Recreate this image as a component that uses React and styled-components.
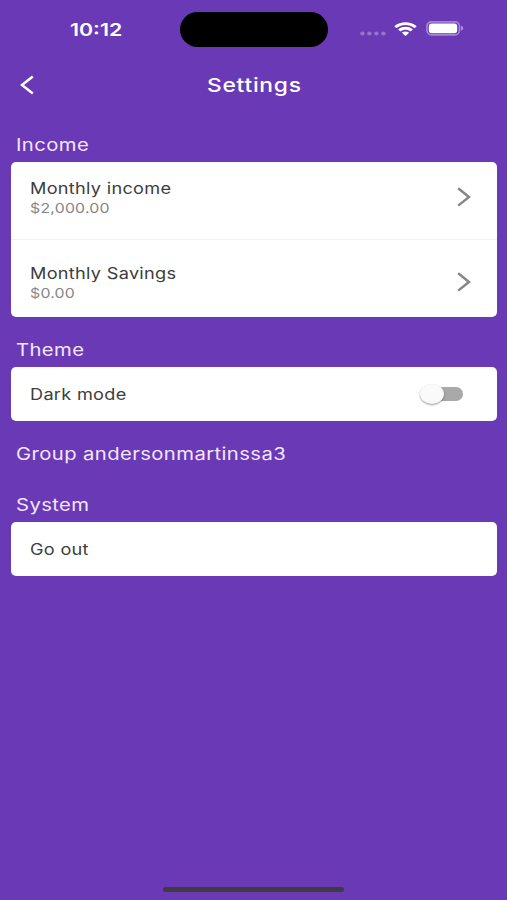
import React from 'react'
import styled, { createGlobalStyle } from 'styled-components'

const App = () => {
  return (
    <Screen>
      <GlobalStyle />
      <StatusBar>
        <Clock><Label $size={17.5} $weight={600} $stretch={1.22}>10:12</Label></Clock>
        <Island />
        <StatusIcons>
          <SignalDots />
          <WifiIcon />
          <BatteryIcon />
        </StatusIcons>
      </StatusBar>

      <NavBar>
        <BackButton aria-label="Back">
          <svg width="15" height="20" viewBox="0 0 15 20" fill="none">
            <path d="M12.8 1.4 L2 10 L12.8 18.4" stroke="#fff" strokeWidth="2.5" />
          </svg>
        </BackButton>
        <Title><Label $size={19} $weight={500} $stretch={1.2} $spacing={0.6}>Settings</Label></Title>
      </NavBar>

      <Section>
        <Heading><HeadingLabel>Income</HeadingLabel></Heading>
        <Card>
          <Row $top={16} $bottom={21}>
            <RowText>
              <RowTitle>Monthly income</RowTitle>
              <RowValue>$2,000.00</RowValue>
            </RowText>
            <ChevronRight />
          </Row>
          <Divider />
          <Row $top={23} $bottom={14}>
            <RowText>
              <RowTitle>Monthly Savings</RowTitle>
              <RowValue>$0.00</RowValue>
            </RowText>
            <ChevronRight />
          </Row>
        </Card>
      </Section>

      <Section>
        <Heading><HeadingLabel>Theme</HeadingLabel></Heading>
        <Card>
          <Row $top={17} $bottom={17}>
            <RowTitle>Dark mode</RowTitle>
            <Switch role="switch" aria-checked="false" aria-label="Dark mode">
              <Thumb />
            </Switch>
          </Row>
        </Card>
      </Section>

      <Section $gap={17}>
        <Heading><HeadingLabel>Group andersonmartinssa3</HeadingLabel></Heading>
      </Section>

      <Section>
        <Heading><HeadingLabel>System</HeadingLabel></Heading>
        <Card>
          <Row $top={17} $bottom={17}>
            <RowTitle>Go out</RowTitle>
          </Row>
        </Card>
      </Section>

      <HomeIndicator />
    </Screen>
  )
}

const SignalDots = () => (
  <svg width="27" height="16" viewBox="0 0 27 16" fill="#fff" fillOpacity="0.3">
    <ellipse cx="2.4" cy="12.5" rx="2.2" ry="1.9" />
    <ellipse cx="9.4" cy="12.5" rx="2.2" ry="1.9" />
    <ellipse cx="16.4" cy="12.5" rx="2.2" ry="1.9" />
    <ellipse cx="23.4" cy="12.5" rx="2.2" ry="1.9" />
  </svg>
)

const WifiIcon = () => (
  <Wifi width="23" height="14" viewBox="0.2 0 16.6 11.4" preserveAspectRatio="none" fill="#fff">
    <path d="M8.5 2.4c2.4 0 4.6.9 6.3 2.5.1.1.3.1.4 0l1.2-1.2c.2-.2.2-.3 0-.5C12-.9 5-.9.6 3.2c-.2.2-.2.3 0 .5l1.2 1.2c.1.1.3.1.4 0C3.9 3.3 6.1 2.4 8.5 2.4z" />
    <path d="M8.5 6.3c1.3 0 2.5.5 3.5 1.3.1.1.3.1.4 0l1.2-1.2c.2-.2.2-.3 0-.5-2.9-2.6-7.3-2.6-10.2 0-.2.2-.2.3 0 .5l1.2 1.2c.1.1.3.1.4 0 1-.8 2.2-1.3 3.5-1.3z" />
    <path d="M10.900 9c.2-.2.2-.3 0-.5-1.400-1.100-3.400-1.100-4.800 0-.2.2-.2.3 0 .5l2.100 2.100c.2.2.4.2.6 0L10.900 9z" />
  </Wifi>
)

const BatteryIcon = () => (
  <Battery width="38" height="15" viewBox="0 0 38 15">
    <rect x="0.9" y="0.8" width="32.6" height="13" rx="4.5" fill="none" stroke="#fff" strokeOpacity="0.38" strokeWidth="1.7" />
    <rect x="2.8" y="2.4" width="28.4" height="9.8" rx="3" fill="#fff" />
    <path d="M35.2 4.8v5c1.2-.4 1.9-1.4 1.9-2.5s-.7-2.1-1.9-2.5z" fill="#fff" fillOpacity="0.5" />
  </Battery>
)

const ChevronRight = () => (
  <Chevron width="14" height="20" viewBox="0 0 14 20" fill="none">
    <path d="M1.2 1.2 L12 10 L1.2 18.6" stroke="#858585" strokeWidth="2.4" />
  </Chevron>
)

const GlobalStyle = createGlobalStyle`
  * {
    box-sizing: border-box;
  }
  body {
    margin: 0;
    background: #6a39b5;
  }
`

const Screen = styled.div`
  display: flex;
  flex-direction: column;
  height: 900px;
  background: #6a39b5;
  font-family: Inter, 'Liberation Sans', sans-serif;
  color: #fff;
`

const Label = styled.span`
  display: inline-block;
  font-size: ${(p) => p.$size}px;
  font-weight: ${(p) => p.$weight || 400};
  letter-spacing: ${(p) => p.$spacing || 0}px;
  white-space: nowrap;
  transform: scaleX(${(p) => p.$stretch || 1.15});
  transform-origin: left center;
`

const StatusBar = styled.div`
  display: grid;
  grid-template-columns: 180px 148px 1fr;
  align-items: center;
  height: 58px;
`

const Clock = styled.div`
  padding: 2px 0 0 70px;
  line-height: 20px;
`

const Island = styled.div`
  height: 35px;
  margin-top: 1px;
  border-radius: 18px;
  background: #000;
`

const StatusIcons = styled.div`
  display: flex;
  align-items: center;
  padding-left: 32px;
  gap: 7px;
`

const Wifi = styled.svg`
  margin-top: -1px;
`

const Battery = styled.svg`
  margin: -1px 0 0 2px;
`

const NavBar = styled.header`
  display: grid;
  grid-template-columns: 207px 1fr;
  align-items: center;
  height: 54px;
  margin-bottom: 16px;
`

const BackButton = styled.button`
  display: flex;
  width: 40px;
  padding: 0 0 0 20px;
  border: 0;
  background: none;
`

const Title = styled.div`
  padding-top: 2px;
  line-height: 24px;
`

const Section = styled.section`
  margin: 0 10px ${(p) => p.$gap || 16}px 11px;
`

const Heading = styled.div`
  height: 34px;
  padding-left: 5px;
  line-height: 35px;
`

const HeadingLabel = styled(Label).attrs({ $size: 17, $stretch: 1.19, $spacing: 0.35 })`
  color: #f3e6ff;
`

const Card = styled.div`
  border-radius: 5px;
  background: #fff;
`

const Row = styled.div`
  display: flex;
  align-items: center;
  justify-content: space-between;
  padding: ${(p) => p.$top}px 26px ${(p) => p.$bottom}px 19px;
`

const RowText = styled.div`
  display: flex;
  flex-direction: column;
  align-items: flex-start;
`

const RowTitle = styled(Label).attrs({ $size: 15.5, $stretch: 1.17, $spacing: 0.25 })`
  padding-top: 1px;
  line-height: 19px;
  color: #3d3d3d;
`

const RowValue = styled(Label).attrs({ $size: 13.3, $stretch: 1.19, $spacing: 0.2 })`
  line-height: 20px;
  color: #858585;
`

const Divider = styled.div`
  height: 1px;
  background: #f3f3f3;
`

const Chevron = styled.svg`
  margin-top: -2px;
`

const Switch = styled.div`
  display: flex;
  align-items: center;
  width: 36px;
  height: 14px;
  margin-right: 8px;
  border-radius: 8px;
  background: #a9a9a9;
`

const Thumb = styled.div`
  flex: none;
  width: 24px;
  height: 20px;
  margin-left: -7px;
  border-radius: 50%;
  background: #fafafa;
  box-shadow: 0 1px 2px rgba(0, 0, 0, 0.4);
`

const HomeIndicator = styled.div`
  width: 181px;
  height: 5px;
  margin: auto auto 8px 163px;
  border-radius: 2px;
  background: #3f3b3f;
`

export default App
